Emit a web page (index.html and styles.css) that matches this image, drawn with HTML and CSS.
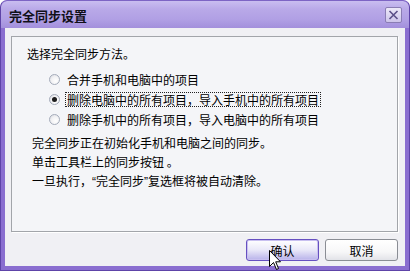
FILE: index.html
```html
<!DOCTYPE html>
<html lang="zh-CN">
<head>
<meta charset="utf-8">
<title>完全同步设置</title>
<link rel="stylesheet" href="styles.css">
</head>
<body>
<div class="window">
  <div class="titlebar">
    <span class="title">完全同步设置</span>
    <button class="close" aria-label="关闭">
      <svg width="11" height="10" viewBox="0 0 11 10"><path d="M1.5 1 L9.5 9 M9.5 1 L1.5 9" stroke="#5b4f88" stroke-width="1.6" fill="none"/></svg>
    </button>
  </div>
  <div class="body">
    <div class="panel">
      <p class="lead">选择完全同步方法。</p>
      <ul class="options">
        <li class="opt"><span class="radio"></span><span class="label">合并手机和电脑中的项目</span></li>
        <li class="opt"><span class="radio checked"></span><span class="label focus">删除电脑中的所有项目，导入手机中的所有项目</span></li>
        <li class="opt"><span class="radio"></span><span class="label">删除手机中的所有项目，导入电脑中的所有项目</span></li>
      </ul>
      <div class="notes">
        <p>完全同步正在初始化手机和电脑之间的同步。</p>
        <p>单击工具栏上的同步按钮 。</p>
        <p>一旦执行，<span class="q">“</span>完全同步<span class="q">”</span>复选框将被自动清除。</p>
      </div>
    </div>
    <div class="buttons">
      <button class="btn default">确认</button>
      <button class="btn">取消</button>
    </div>
  </div>
  <svg class="cursor" width="13" height="21" viewBox="0 0 13 21"><path d="M0.5 0.5 L0.5 16.5 L4.5 12.5 L7.5 19.5 L9.5 18.5 L6.7 11.8 L11.5 11.8 Z" fill="#fff" stroke="#000" stroke-width="1" stroke-linejoin="miter"/></svg>
</div>
</body>
</html>
```
FILE: styles.css
```css
* { box-sizing: border-box; }
html, body { margin: 0; padding: 0; }
body {
  width: 410px;
  height: 271px;
  overflow: hidden;
  background: #fff;
  font-family: "Noto Sans CJK SC", sans-serif;
  font-size: 12px;
  color: #000;
}
.window {
  position: relative;
  width: 410px;
  height: 271px;
  background: #8a6ed0;
  border-radius: 7px 7px 0 0;
  border: 1px solid #5e44a8;
  border-top-color: #7d64c4;
  display: flex;
  flex-direction: column;
  overflow: hidden;
}
.titlebar {
  height: 27px;
  flex: none;
  display: flex;
  align-items: center;
  justify-content: space-between;
  padding: 0 8px 0 8px;
  background: linear-gradient(to bottom, #c9bdf0 0%, #b9a9e8 30%, #b09fe4 70%, #a390dc 100%);
  border-radius: 6px 6px 0 0;
  margin: 0 0 0 0;
}
.title {
  font-weight: bold;
  font-size: 13px;
  color: #101018;
  letter-spacing: 0;
  padding-top: 1px;
}
.close {
  width: 17px;
  height: 16px;
  padding: 0;
  margin: 0 -1px 0 0;
  border: 1px solid #8a7db4;
  border-radius: 2px;
  background: linear-gradient(to bottom, #ece8f8, #cdc4ea);
  display: flex;
  align-items: center;
  justify-content: center;
}
.body {
  flex: 1;
  margin: 0 4px 4px 4px;
  background: #f0f0f4;
  padding: 8px 7px 5px 6px;
  display: flex;
  flex-direction: column;
}
.panel {
  height: 196px;
  flex: none;
  border: 1px solid #a2a5aa;
  box-shadow: 1px 1px 0 #ffffff;
  background: #f4f5f8;
  padding: 7px 10px 0 15px;
}
p { margin: 0; }
.lead { line-height: 19px; }
.options {
  list-style: none;
  margin: 6px 0 0 0;
  padding: 0 0 0 22px;
}
.opt {
  height: 20px;
  display: flex;
  align-items: center;
}
.radio {
  width: 11px;
  height: 11px;
  border-radius: 50%;
  border: 1px solid #a4abba;
  background: radial-gradient(circle at 65% 65%, #ffffff 0%, #f2f2f4 50%, #d6d8de 100%);
  margin-right: 5px;
  flex: none;
  position: relative;
}
.radio.checked::after {
  content: "";
  position: absolute;
  left: 2px;
  top: 2px;
  width: 5px;
  height: 5px;
  border-radius: 50%;
  background: #1c1c1c;
}
.label {
  padding: 0 1px;
  border: 1px dotted transparent;
  line-height: 13px;
  height: 15px;
}
.label.focus { border-color: #222; }
.notes {
  margin: 4px 0 0 5px;
  line-height: 19px;
}
.q { font-family: "Liberation Sans", sans-serif; }
.buttons {
  display: flex;
  justify-content: flex-end;
  gap: 6px;
  margin-top: 7px;
  padding-right: 0;
}
.btn {
  width: 73px;
  height: 22px;
  padding: 0;
  font-family: "Noto Sans CJK SC", sans-serif;
  font-size: 12px;
  color: #000;
  border: 1px solid #8a8d94;
  border-radius: 3px;
  background: linear-gradient(to bottom, #ffffff 0%, #f7f7f8 60%, #e2e3e8 100%);
}
.btn.default {
  border-color: #6650c0;
  background: linear-gradient(to bottom, #ffffff 0%, #e9e8f8 50%, #b8b2ea 100%);
  box-shadow: inset 0 0 0 1px #c8c0f0;
}
.cursor {
  position: absolute;
  left: 268px;
  top: 249px;
}
```
